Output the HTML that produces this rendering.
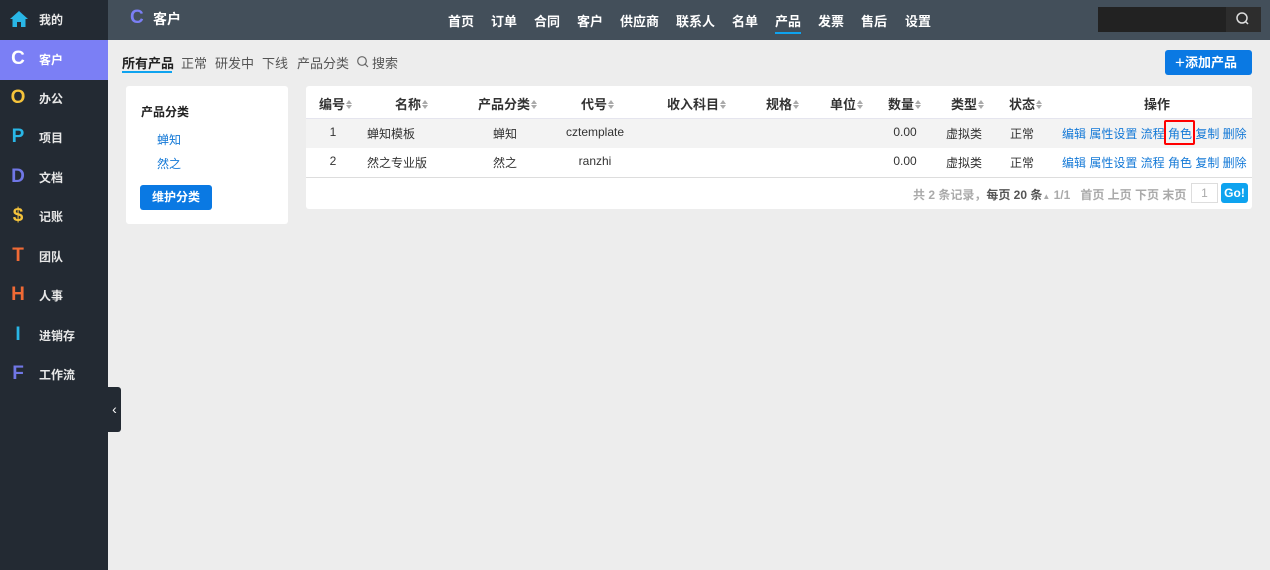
<!DOCTYPE html>
<html><head><meta charset="utf-8"><style>
*{margin:0;padding:0;box-sizing:border-box}
body{width:1270px;height:570px;overflow:hidden;background:#ededed;font-family:"Liberation Sans","Noto Sans CJK SC",sans-serif;font-size:12px;color:#333;position:relative}
.a{position:absolute;white-space:nowrap}
#side{position:absolute;left:0;top:0;width:108px;height:570px;background:#232a33}
.it{position:absolute;left:0;width:108px;height:40px;color:#e8e8e8;font-weight:bold;font-size:12px}
.it .ic{position:absolute;left:9px;top:8px;width:18px;height:22px;font-size:19px;font-weight:bold;text-align:center;line-height:22px;font-family:"Liberation Sans",sans-serif}
.it .t{position:absolute;left:39px;top:11px}
#top{position:absolute;left:108px;top:0;width:1162px;height:40px;background:#434f5a}
.nav{position:absolute;top:11px;color:#fff;font-weight:bold;font-size:13px}
.card{position:absolute;background:#fff;border-radius:3px}
.th{position:absolute;top:94px;font-weight:bold;font-size:13px;color:#333;transform:translateX(-50%)}
.s{display:inline-block;width:7px;height:10px;position:relative;vertical-align:-1px;margin-left:1px}
.s:before{content:"";position:absolute;left:0;top:0;border:3.5px solid transparent;border-bottom:4px solid #aaa;border-top:0}
.s:after{content:"";position:absolute;left:0;top:5px;border:3.5px solid transparent;border-top:4px solid #aaa;border-bottom:0}
.td{position:absolute;transform:translateX(-50%);font-size:12px;color:#333}
.lk{color:#1479d7}
</style></head><body>
<div id="side">
<div class="it" style="top:0"><span class="ic"><svg width="20" height="18" viewBox="0 0 20 18" style="margin-top:2px"><path d="M10 1 L1 9 L3.5 9 L3.5 17 L8 17 L8 12 L12 12 L12 17 L16.5 17 L16.5 9 L19 9 Z" fill="#29b6e6"/></svg></span><span class="t">我的</span></div>
<div class="it" style="top:40px;background:#7b7ff5"><span class="ic" style="color:#fff">C</span><span class="t" style="color:#fff">客户</span></div>
<div class="it" style="top:79px"><span class="ic" style="color:#f5c33b">O</span><span class="t">办公</span></div>
<div class="it" style="top:118px"><span class="ic" style="color:#29b6e6">P</span><span class="t">项目</span></div>
<div class="it" style="top:158px"><span class="ic" style="color:#7077e6">D</span><span class="t">文档</span></div>
<div class="it" style="top:197px"><span class="ic" style="color:#f5c33b">$</span><span class="t">记账</span></div>
<div class="it" style="top:237px"><span class="ic" style="color:#f06a35">T</span><span class="t">团队</span></div>
<div class="it" style="top:276px"><span class="ic" style="color:#f06a35">H</span><span class="t">人事</span></div>
<div class="it" style="top:316px"><span class="ic" style="color:#29b6e6">I</span><span class="t">进销存</span></div>
<div class="it" style="top:355px"><span class="ic" style="color:#7077e6">F</span><span class="t">工作流</span></div>
</div>
<div class="a" style="left:108px;top:387px;width:13px;height:45px;background:#232a33;border-radius:0 3px 3px 0;color:#fff;font-size:14px;line-height:45px;text-align:center">‹</div>
<div id="top">
<span class="a" style="left:22px;top:7px;color:#7b7ff5;font-size:19px;font-weight:bold">C</span>
<span class="a" style="left:45px;top:9px;color:#fff;font-size:14px;font-weight:bold">客户</span>
</div>
<span class="nav a" style="left:448px">首页</span><span class="nav a" style="left:491px">订单</span><span class="nav a" style="left:534px">合同</span><span class="nav a" style="left:577px">客户</span><span class="nav a" style="left:620px">供应商</span><span class="nav a" style="left:676px">联系人</span><span class="nav a" style="left:732px">名单</span><span class="nav a" style="left:775px">产品</span><span class="nav a" style="left:818px">发票</span><span class="nav a" style="left:861px">售后</span><span class="nav a" style="left:905px">设置</span>
<div class="a" style="left:775px;top:32px;width:26px;height:2px;background:#0ea3ef"></div>
<div class="a" style="left:1098px;top:7px;width:128px;height:25px;background:#222"></div>
<div class="a" style="left:1226px;top:7px;width:35px;height:25px;background:#2d2d2d"><svg width="35" height="25"><circle cx="16" cy="11" r="5" stroke="#ddd" stroke-width="1.5" fill="none"/><path d="M19.5 14.5 L22 17" stroke="#ddd" stroke-width="1.5"/></svg></div>

<span class="a" style="left:122px;top:53px;font-size:13px;font-weight:bold;color:#222">所有产品</span>
<div class="a" style="left:122px;top:71px;width:50px;height:2px;background:#0ea3ef"></div>
<span class="a" style="left:181px;top:53px;font-size:13px;color:#555">正常</span>
<span class="a" style="left:215px;top:53px;font-size:13px;color:#555">研发中</span>
<span class="a" style="left:262px;top:53px;font-size:13px;color:#555">下线</span>
<span class="a" style="left:297px;top:53px;font-size:13px;color:#555">产品分类</span>
<svg class="a" style="left:356px;top:55px" width="13" height="13"><circle cx="6" cy="6" r="4.3" stroke="#666" stroke-width="1.2" fill="none"/><path d="M9 9 L12 12" stroke="#666" stroke-width="1.2"/></svg>
<span class="a" style="left:372px;top:53px;font-size:13px;color:#555">搜索</span>
<div class="a" style="left:1165px;top:50px;width:87px;height:25px;background:#0a79e3;border-radius:3px;color:#fff;font-weight:bold;font-size:13px;line-height:25px;padding-left:10px"><span style="font-size:17px;font-weight:normal;vertical-align:-1px">+</span>添加产品</div>

<div class="card" style="left:126px;top:86px;width:162px;height:138px"></div>
<span class="a" style="left:141px;top:103px;font-weight:bold;font-size:12px;color:#222">产品分类</span>
<span class="a lk" style="left:157px;top:131px;font-size:12px">蝉知</span>
<span class="a lk" style="left:157px;top:155px;font-size:12px">然之</span>
<div class="a" style="left:140px;top:185px;width:72px;height:25px;background:#0a79e3;border-radius:3px;color:#fff;font-weight:bold;text-align:center;line-height:25px;font-size:12px">维护分类</div>

<div class="card" style="left:306px;top:86px;width:946px;height:123px"></div>
<div class="a" style="left:306px;top:118px;width:946px;height:30px;background:#f3f3f3;border-top:1px solid #e5e5ee"></div>
<div class="a" style="left:306px;top:177px;width:946px;height:1px;background:#ddd"></div>
<span class="th" style="left:336px">编号<i class="s"></i></span>
<span class="th" style="left:412px">名称<i class="s"></i></span>
<span class="th" style="left:508px">产品分类<i class="s"></i></span>
<span class="th" style="left:598px">代号<i class="s"></i></span>
<span class="th" style="left:697px">收入科目<i class="s"></i></span>
<span class="th" style="left:783px">规格<i class="s"></i></span>
<span class="th" style="left:847px">单位<i class="s"></i></span>
<span class="th" style="left:905px">数量<i class="s"></i></span>
<span class="th" style="left:968px">类型<i class="s"></i></span>
<span class="th" style="left:1026px">状态<i class="s"></i></span>
<span class="th" style="left:1157px">操作</span>

<span class="td" style="left:333px;top:125px">1</span>
<span class="a" style="left:367px;top:125px">蝉知模板</span>
<span class="td" style="left:505px;top:125px">蝉知</span>
<span class="td" style="left:595px;top:125px">cztemplate</span>
<span class="td" style="left:905px;top:125px">0.00</span>
<span class="td" style="left:964px;top:125px">虚拟类</span>
<span class="td" style="left:1022px;top:125px">正常</span>
<span class="a lk" style="left:1062px;top:125px">编辑 属性设置 流程 角色 复制 删除</span>
<div class="a" style="left:1164px;top:120px;width:31px;height:25px;border:2px solid #f00;border-radius:2px"></div>

<span class="td" style="left:333px;top:154px">2</span>
<span class="a" style="left:367px;top:154px">然之专业版</span>
<span class="td" style="left:505px;top:154px">然之</span>
<span class="td" style="left:595px;top:154px">ranzhi</span>
<span class="td" style="left:905px;top:154px">0.00</span>
<span class="td" style="left:964px;top:154px">虚拟类</span>
<span class="td" style="left:1022px;top:154px">正常</span>
<span class="a lk" style="left:1062px;top:154px">编辑 属性设置 流程 角色 复制 删除</span>

<span class="a" style="left:913px;top:186px;color:#aaa;font-weight:bold">共 2 条记录，<span style="color:#555">每页 20 条</span><span style="font-size:8px">▲</span> 1/1 &nbsp; 首页 上页 下页 末页</span>
<div class="a" style="left:1191px;top:183px;width:27px;height:20px;border:1px solid #ddd;color:#aaa;text-align:center;line-height:18px">1</div>
<div class="a" style="left:1221px;top:183px;width:27px;height:20px;background:#0ea3ef;border-radius:3px;color:#fff;font-weight:bold;text-align:center;line-height:20px">Go!</div>
</body></html>
